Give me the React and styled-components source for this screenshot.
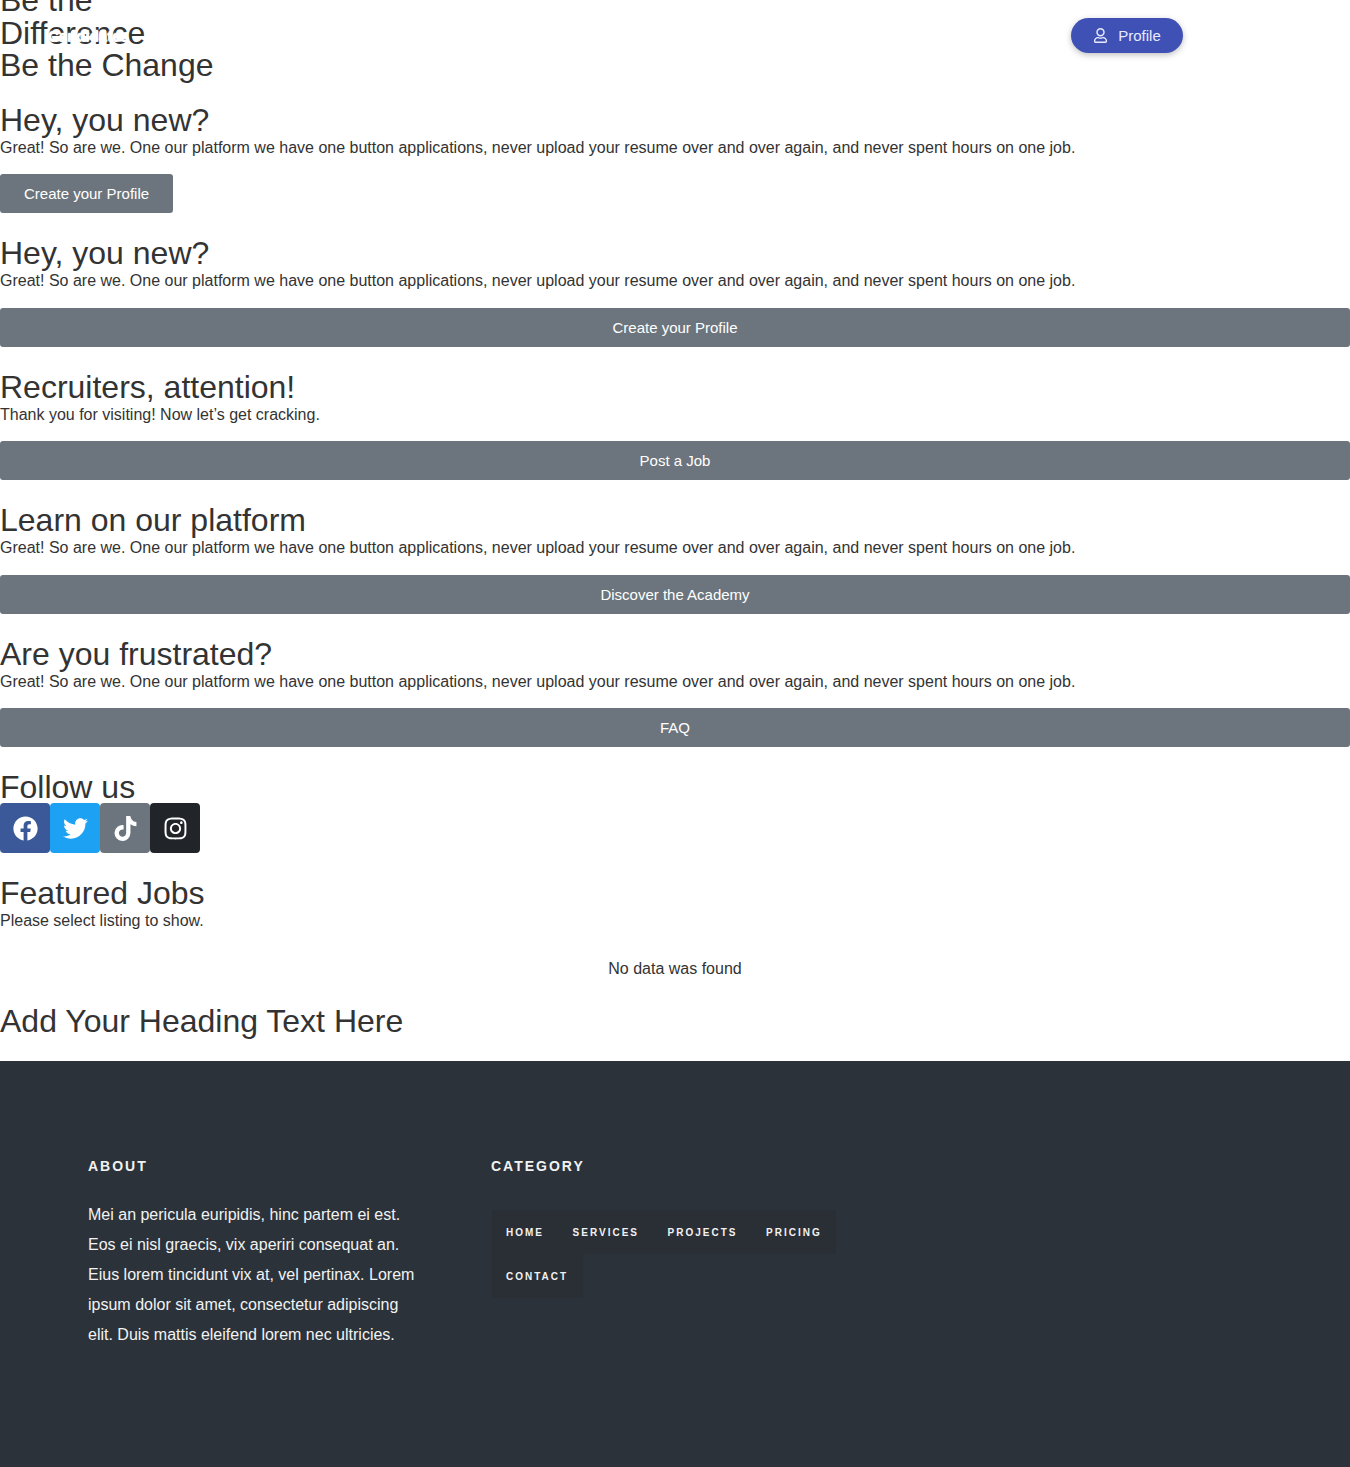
import React from 'react';
import styled, {createGlobalStyle} from 'styled-components';
import {FaFacebook, FaTwitter, FaTiktok, FaInstagram, FaRegUser} from 'react-icons/fa';

const GlobalStyle = createGlobalStyle`
html, body { margin:0; padding:0; background:#fff; }
body { font-family:"Liberation Sans", Arial, sans-serif; color:#333; overflow-x:hidden; }
`;

const Page = styled.div`
position:relative;
width:1350px;
height:1467px;
overflow:hidden;
`;
const TopBar = styled.div`
position:absolute;
top:18px;
left:0;
width:100%;
`;
const Logo = styled.div`
position:absolute;
left:48px;
top:9px;
color:#fff;
font-size:15px;
font-weight:bold;
line-height:18px;
text-shadow:0 0 2px #fff, 0 1px 0 #fff;
`;
const ProfileButton = styled.div`
position:absolute;
left:1071px;
top:0;
width:112px;
height:35px;
box-sizing:border-box;
display:flex;
align-items:center;
justify-content:center;
gap:10px;
background:#3f51b5;
color:#e8ebff;
font-size:15px;
border-radius:18px;
box-shadow:0 2px 6px rgba(0,0,0,.25);
`;
const Main = styled.main`
display:flex;
flex-direction:column;
margin-top:-16px;
height:1077px;
`;
const Hero = styled.h1`
margin:0;
width:${(props) => props.width}px;
font-size:32px;
font-weight:normal;
line-height:32.5px;
color:#333;
`;
const Section = styled.section`
display:flex;
flex-direction:column;
align-items:flex-start;
margin-top:${(props) => props.top || 0}px;
`;
const Heading = styled.h2`
margin:0;
font-size:32px;
font-weight:normal;
line-height:37px;
color:#333;
`;
const Text = styled.p`
margin:0;
font-size:16px;
line-height:18px;
color:#333;
`;
const ActionButton = styled.div`
margin-top:17.5px;
box-sizing:border-box;
height:39px;
display:flex;
align-items:center;
justify-content:center;
padding:0 24px;
width:${(props) => (props.wide ? '100%' : 'auto')};
background:#6c757d;
color:#fff;
font-size:15px;
border-radius:3px;
`;
const Socials = styled.div`
display:flex;
margin-top:-3px;
`;
const SocialLink = styled.div`
width:50px;
height:50px;
display:flex;
align-items:center;
justify-content:center;
background:${(props) => props.color};
color:#fff;
font-size:25px;
border-radius:4px;
`;
const Empty = styled.div`
width:100%;
margin-top:30px;
text-align:center;
font-size:16px;
line-height:18px;
color:#333;
`;
const Footer = styled.footer`
height:406px;
background:#2c323a;
box-sizing:border-box;
padding:97px 88px 0;
display:flex;
color:#fff;
`;
const AboutCol = styled.div`
width:403px;
flex:none;
`;
const ColTitle = styled.h4`
margin:0;
font-size:14px;
font-weight:bold;
letter-spacing:2px;
line-height:16px;
color:#f2f2f2;
`;
const AboutText = styled.p`
margin:26px 0 0;
width:330px;
font-size:16px;
line-height:30px;
color:#f2f2f2;
`;
const NavList = styled.div`
margin-top:36px;
margin-left:1px;
width:400px;
display:flex;
flex-wrap:wrap;
`;
const NavItem = styled.div`
height:44px;
box-sizing:border-box;
padding:0 14.6px 0 14px;
display:flex;
align-items:center;
background:#2a2e35;
color:#f2f2f2;
font-size:10px;
font-weight:bold;
letter-spacing:2px;
`;

const Block = ({top, title, text, button, wide}) => (
  <Section top={top}>
    <Heading>{title}</Heading>
    <Text>{text}</Text>
    <ActionButton wide={wide}>{button}</ActionButton>
  </Section>
);

const longText = 'Great! So are we. One our platform we have one button applications, never upload your resume over and over again, and never spent hours on one job.';

const App = () => (
  <Page>
    <GlobalStyle />
    <Main>
      <Hero width={150}>Be the Difference</Hero>
      <Hero width={230}>Be the Change</Hero>
      <Block top={20} title="Hey, you new?" text={longText} button="Create your Profile" />
      <Block top={22} title="Hey, you new?" text={longText} button="Create your Profile" wide />
      <Block top={22} title="Recruiters, attention!" text="Thank you for visiting! Now let’s get cracking." button="Post a Job" wide />
      <Block top={22} title="Learn on our platform" text={longText} button="Discover the Academy" wide />
      <Block top={22} title="Are you frustrated?" text={longText} button="FAQ" wide />
      <Section top={22}>
        <Heading>Follow us</Heading>
        <Socials>
          <SocialLink color="#3b5998"><FaFacebook /></SocialLink>
          <SocialLink color="#1da1f2"><FaTwitter /></SocialLink>
          <SocialLink color="#6c757d"><FaTiktok /></SocialLink>
          <SocialLink color="#212529"><FaInstagram /></SocialLink>
        </Socials>
      </Section>
      <Section top={22}>
        <Heading>Featured Jobs</Heading>
        <Text>Please select listing to show.</Text>
        <Empty>No data was found</Empty>
      </Section>
      <Section top={25}>
        <Heading>Add Your Heading Text Here</Heading>
      </Section>
    </Main>
    <Footer>
      <AboutCol>
        <ColTitle>ABOUT</ColTitle>
        <AboutText>Mei an pericula euripidis, hinc partem ei est. Eos ei nisl graecis, vix aperiri consequat an. Eius lorem tincidunt vix at, vel pertinax. Lorem ipsum dolor sit amet, consectetur adipiscing elit. Duis mattis eleifend lorem nec ultricies.</AboutText>
      </AboutCol>
      <div>
        <ColTitle>CATEGORY</ColTitle>
        <NavList>
          {['HOME', 'SERVICES', 'PROJECTS', 'PRICING', 'CONTACT'].map((item) => (
            <NavItem key={item}>{item}</NavItem>
          ))}
        </NavList>
      </div>
    </Footer>
    <TopBar>
      <Logo>Candidates</Logo>
      <ProfileButton><FaRegUser size={15} />Profile</ProfileButton>
    </TopBar>
  </Page>
);

export default App;
